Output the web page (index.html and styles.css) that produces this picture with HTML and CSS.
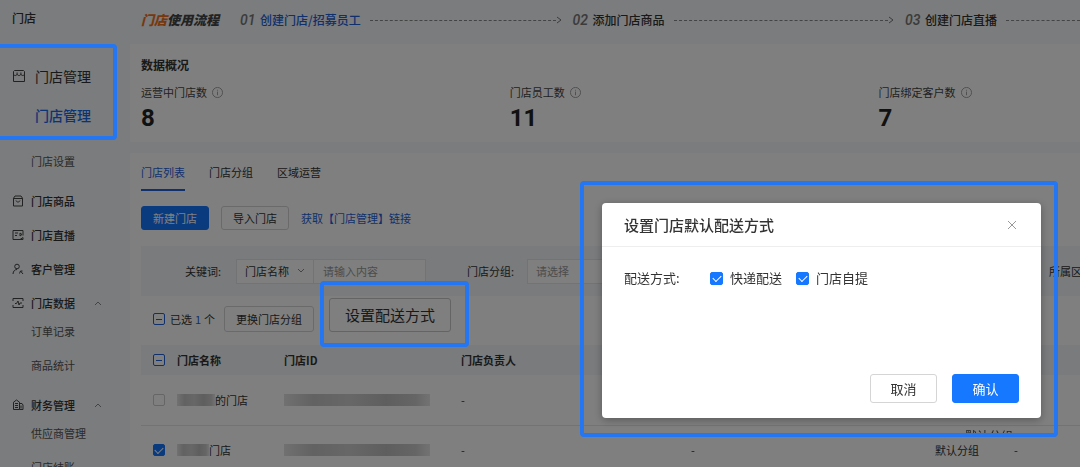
FILE: index.html
```html
<!DOCTYPE html>
<html lang="zh-CN">
<head>
  <meta charset="UTF-8">
  <meta name="viewport" content="width=device-width, initial-scale=1.0">
  <title>门店管理</title>
  <link rel="stylesheet" href="styles.css">
</head>
<body>
  <div class="layout">
    <aside class="sidebar">
      <h2 class="sidebar-title">门店</h2>
      <nav class="menu">
        <div class="menu-current">
          <a class="menu-big" href="#">
            <svg class="icon icon-big" viewBox="0 0 14 14"><path d="M2.5 1.500h9l1 1v10h-11v-10zM1.500 5c0 2 3.600 2 3.600 0 0 2 3.800 2 3.800 0 0 2 3.600 2 3.600 0M5.100 3.500V5M8.900 3.500V5"/></svg>
            门店管理
          </a>
          <a class="menu-big active" href="#">门店管理</a>
        </div>
        <a class="menu-sub" href="#">门店设置</a>
        <a class="menu-item" href="#">
          <svg class="icon" viewBox="0 0 12 12"><path d="M1.5 3.2 3 1h6l1.500 2.200V11h-9zM1.500 3.500h9M4 5.500c.5 2 3.500 2 4 0"/></svg>
          门店商品
        </a>
        <a class="menu-item" href="#">
          <svg class="icon" viewBox="0 0 12 12"><path d="M8 10.500H1v-9h10v5M3 4h3M3 6.500h2M8 4l2 1.500L8 7zM8 10.500l3-2v2z"/></svg>
          门店直播
        </a>
        <a class="menu-item" href="#">
          <svg class="icon" viewBox="0 0 12 12"><circle cx="5" cy="3.500" r="2.300"/><path d="M1 11c.2-3 1.800-4.500 4-4.500M7.500 10.500l1-2.500 2.500 3M8.500 8h2"/></svg>
          客户管理
        </a>
        <a class="menu-item" href="#">
          <svg class="icon" viewBox="0 0 12 12"><path d="M1 4V1.500h10V4M1 8v2.500h10V8M3 6.500h1.500L6 4l1 4 1-2h2"/></svg>
          门店数据
          <svg class="arrow" viewBox="0 0 8 6"><path d="m1 5 3-3 3 3"/></svg>
        </a>
        <div class="menu-group">
          <a class="menu-sub" href="#">订单记录</a>
          <a class="menu-sub" href="#">商品统计</a>
        </div>
        <a class="menu-item" href="#">
          <svg class="icon" viewBox="0 0 12 12"><path d="M1.500 10.500V3.200L4.500 1l3 2.200v7.300zM3 4.500h3M3 6.500h3M3 8.500h3M7.500 4.500H10l1 1.500v4.500H7.500M9 6.500v3"/></svg>
          财务管理
          <svg class="arrow" viewBox="0 0 8 6"><path d="m1 5 3-3 3 3"/></svg>
        </a>
        <div class="menu-group">
          <a class="menu-sub" href="#">供应商管理</a>
          <a class="menu-sub" href="#">门店结账</a>
        </div>
      </nav>
    </aside>

    <main class="main">
      <header class="flow">
        <h1 class="flow-title"><span class="orange">门店</span>使用流程</h1>
        <ol class="steps">
          <li class="step active">
            <span class="num">01</span>创建门店/招募员工<span class="dash"></span>
            <svg class="tip" viewBox="0 0 6 8"><path d="m1 1 4 3-4 3"/></svg>
          </li>
          <li class="step">
            <span class="num">02</span>添加门店商品<span class="dash"></span>
            <svg class="tip" viewBox="0 0 6 8"><path d="m1 1 4 3-4 3"/></svg>
          </li>
          <li class="step last">
            <span class="num">03</span>创建门店直播<span class="dash"></span>
          </li>
        </ol>
      </header>

      <section class="card overview">
        <h2 class="card-title">数据概况</h2>
        <div class="stats">
          <div class="stat">
            <p class="stat-label">运营中门店数
              <svg class="info" viewBox="0 0 12 12"><circle cx="6" cy="6" r="5.500"/><path d="M6 5v4M6 3v1"/></svg>
            </p>
            <p class="stat-value">8</p>
          </div>
          <div class="stat">
            <p class="stat-label">门店员工数
              <svg class="info" viewBox="0 0 12 12"><circle cx="6" cy="6" r="5.500"/><path d="M6 5v4M6 3v1"/></svg>
            </p>
            <p class="stat-value">11</p>
          </div>
          <div class="stat">
            <p class="stat-label">门店绑定客户数
              <svg class="info" viewBox="0 0 12 12"><circle cx="6" cy="6" r="5.500"/><path d="M6 5v4M6 3v1"/></svg>
            </p>
            <p class="stat-value">7</p>
          </div>
        </div>
      </section>

      <section class="card list">
        <nav class="tabs">
          <a class="tab active" href="#">门店列表</a>
          <a class="tab" href="#">门店分组</a>
          <a class="tab" href="#">区域运营</a>
        </nav>

        <div class="actions">
          <button class="btn primary" type="button">新建门店</button>
          <button class="btn" type="button">导入门店</button>
          <a class="link" href="#">获取【门店管理】链接</a>
        </div>

        <form class="filter">
          <label class="filter-label" for="keyword-type">关键词:</label>
          <div class="field-group">
            <span class="select-box">
              <select id="keyword-type"><option>门店名称</option></select>
              <svg class="arrow" viewBox="0 0 8 6"><path d="m1 1 3 3 3-3"/></svg>
            </span>
            <input class="text-input" type="text" placeholder="请输入内容" aria-label="关键词内容">
          </div>
          <label class="filter-label second" for="group">门店分组:</label>
          <span class="select-box empty">
            <select id="group"><option>请选择</option></select>
          </span>
          <label class="filter-label area" for="area">所属区域:</label>
          <span class="select-box empty">
            <select id="area"><option>请选择</option></select>
          </span>
        </form>

        <div class="toolbar">
          <label class="picked"><input class="check mixed" type="checkbox">已选 <b class="count">1</b> 个</label>
          <button class="btn group-btn" type="button">更换门店分组</button>
          <span class="delivery">
            <button class="btn delivery-btn" type="button">设置配送方式</button>
          </span>
        </div>

        <table class="table">
          <colgroup>
            <col class="col-check"><col class="col-name"><col class="col-id"><col class="col-owner"><col class="col-phone"><col class="col-group"><col>
          </colgroup>
          <thead>
            <tr>
              <th class="check-cell"><input class="check mixed" type="checkbox" aria-label="全选"></th>
              <th>门店名称</th>
              <th>门店ID</th>
              <th>门店负责人</th>
              <th></th>
              <th></th>
              <th></th>
            </tr>
          </thead>
          <tbody>
            <tr>
              <td class="check-cell"><input class="check" type="checkbox" aria-label="选择门店"></td>
              <td><span class="name"><i class="mosaic long"></i>的门店</span></td>
              <td><i class="mosaic wide"></i></td>
              <td>-</td>
              <td>-</td>
              <td></td>
              <td>-</td>
            </tr>
            <tr>
              <td class="check-cell"><input class="check" type="checkbox" aria-label="选择门店" checked></td>
              <td><span class="name"><i class="mosaic short"></i>门店</span></td>
              <td><i class="mosaic wide"></i></td>
              <td>-</td>
              <td>-</td>
              <td>默认分组</td>
              <td>-</td>
            </tr>
          </tbody>
        </table>
      </section>
    </main>
  </div>

  <div class="mask"></div>

  <div class="dialog-frame">
    <div class="dialog" role="dialog" aria-labelledby="dialog-title">
      <div class="dialog-head">
        <h3 id="dialog-title">设置门店默认配送方式</h3>
        <button class="close" type="button" aria-label="关闭">
          <svg viewBox="0 0 10 10"><path d="m1 1 8 8M9 1 1 9"/></svg>
        </button>
      </div>
      <div class="dialog-body">
        <span class="dialog-label">配送方式:</span>
        <label class="option"><input class="check" type="checkbox" checked>快递配送</label>
        <label class="option"><input class="check" type="checkbox" checked>门店自提</label>
      </div>
      <div class="dialog-foot">
        <button class="btn dialog-btn" type="button">取消</button>
        <button class="btn dialog-btn primary" type="button">确认</button>
      </div>
    </div>
    <span class="peek">默认分组</span>
  </div>
</body>
</html>
```

FILE: styles.css
```css
* {
  box-sizing: border-box;
  margin: 0;
  padding: 0;
}

body {
  height: 100vh;
  overflow: hidden;
  background: #f5f8fa;
  font-family: "Noto Sans CJK SC", sans-serif;
  font-size: 11px;
  line-height: 18px;
  color: #333;
}

a {
  color: inherit;
  text-decoration: none;
}

svg {
  fill: none;
  stroke: currentColor;
  flex: none;
}

button,
input,
select {
  font: inherit;
  color: inherit;
}

.layout {
  display: flex;
  height: 100vh;
  overflow: hidden;
}

/* sidebar */
.sidebar {
  flex: none;
  width: 130px;
}

.sidebar-title {
  height: 44px;
  padding-left: 12px;
  font-size: 12px;
  font-weight: 500;
  line-height: 36px;
}

.menu-current {
  position: relative;
  padding: 12px 0 6px;
  margin-bottom: 4px;
}

.menu-current::after {
  content: "";
  position: absolute;
  inset: 0 13px 0 -4px;
  border: 4px solid #2476f2;
  border-radius: 4px;
  z-index: 20;
}

.menu-big {
  display: flex;
  align-items: center;
  gap: 9px;
  height: 39px;
  padding-left: 12px;
  font-size: 14px;
}

.menu-big.active {
  padding-left: 35px;
  font-weight: 500;
  color: #1668e8;
}

.menu-item {
  display: flex;
  align-items: center;
  gap: 7px;
  height: 22px;
  margin-top: 12px;
  padding-left: 12px;
  font-weight: 500;
}

.menu-sub {
  display: block;
  padding-left: 31px;
  line-height: 34px;
  color: #555;
}

.icon {
  width: 12px;
  height: 12px;
  color: #444;
}

.icon-big {
  width: 14px;
  height: 14px;
}

.arrow {
  width: 8px;
  height: 6px;
  color: #888;
}

.menu-item .arrow {
  margin-left: 12px;
}

/* main */
.main {
  flex: 1;
  min-width: 0;
  display: flex;
  flex-direction: column;
}

.flow {
  flex: none;
  display: flex;
  height: 44px;
  padding: 0 0 4px 11px;
  align-items: center;
}

.flow-title {
  width: 99px;
  font-size: 13px;
  font-style: italic;
  font-weight: 900;
  white-space: nowrap;
  color: #444;
}

.orange {
  color: #f0701c;
}

.steps {
  flex: 1;
  display: grid;
  grid-template-columns: 19fr 19fr 10fr;
  list-style: none;
  font-size: 12px;
  font-weight: 500;
}

.step {
  display: flex;
  align-items: center;
  padding-right: 11px;
  white-space: nowrap;
}

.step.last {
  padding-right: 0;
}

.step.active {
  color: #1f61d8;
}

.num {
  width: 20px;
  font-family: Roboto, sans-serif;
  font-size: 14px;
  font-style: italic;
  font-weight: 500;
  color: #777;
}

.dash {
  flex: 1;
  margin-left: 9px;
  border-top: 1px dashed #888;
}

.tip {
  width: 6px;
  height: 8px;
  color: #777;
}

.card {
  background: #fff;
}

.overview {
  flex: none;
  padding: 12px 17px 11px 11px;
  margin-bottom: 11px;
}

.card-title {
  font-size: 12px;
  font-weight: 700;
  line-height: 18px;
}

.stats {
  display: grid;
  grid-template-columns: 2fr 2fr 1fr;
  margin-top: 9px;
}

.stat-label {
  display: flex;
  align-items: center;
  gap: 5px;
  color: #444;
}

.info {
  width: 11px;
  height: 11px;
  color: #999;
}

.stat-value {
  margin-top: 4px;
  font-family: "Liberation Sans Narrow", Roboto, sans-serif;
  font-size: 24px;
  font-weight: 700;
  line-height: 26px;
  color: #222;
}

.list {
  flex: 1;
  padding-left: 11px;
}

.tabs {
  display: flex;
  gap: 24px;
}

.tab {
  padding-top: 2px;
  line-height: 34px;
  border-bottom: 2px solid transparent;
}

.tab.active {
  color: #1f61d8;
  border-color: #1f61d8;
}

.actions {
  display: flex;
  align-items: center;
  gap: 12px;
  margin-top: 15px;
}

.btn {
  height: 24px;
  padding: 0 11px;
  background: #fff;
  border: 1px solid #d5d5d5;
  border-radius: 3px;
  white-space: nowrap;
}

.btn.primary {
  background: #1677ff;
  border-color: #1677ff;
  color: #fff;
}

.link {
  color: #1f61d8;
}

.filter {
  display: flex;
  align-items: center;
  height: 50px;
  margin-top: 16px;
  padding-left: 44px;
  background: #f2f6f8;
  overflow: hidden;
}

.filter-label {
  flex: none;
  width: 51px;
}

.filter-label.second {
  width: 60px;
  margin-left: 41px;
}

.filter-label.area {
  width: 60px;
  margin-left: auto;
  margin-right: -29px;
}

.field-group {
  display: flex;
}

.select-box {
  display: flex;
  align-items: center;
  width: 78px;
  height: 25px;
  padding: 0 8px;
  background: #fff;
  border: 1px solid #e4e6e8;
}

.select-box select {
  flex: 1;
  min-width: 0;
  appearance: none;
  background: none;
  border: none;
}

.select-box.empty {
  flex: none;
  color: #999;
}

.area + .select-box {
  width: 0;
  padding: 0;
  border: none;
}

.text-input {
  width: 112px;
  height: 25px;
  padding: 0 9px;
  background: #fff;
  border: 1px solid #e4e6e8;
  border-left: none;
}

.text-input::placeholder {
  color: #999;
}

.toolbar {
  display: flex;
  align-items: flex-end;
  height: 49px;
  padding: 0 0 13px 12px;
}

.picked {
  display: flex;
  align-items: center;
  gap: 3px;
  width: 71px;
  height: 26px;
  white-space: nowrap;
}

.picked .check {
  margin-right: 2px;
}

.count {
  font-weight: 400;
  color: #1f61d8;
}

.group-btn {
  height: 26px;
}

.delivery {
  position: relative;
  margin-left: 15px;
}

.delivery::after {
  content: "";
  position: absolute;
  inset: -17px -18px -15px -9px;
  border: 4px solid #2476f2;
  border-radius: 4px;
  z-index: 20;
}

.delivery-btn {
  display: block;
  height: 34px;
  padding: 0 15px;
  font-size: 15px;
  border-color: #c8c8c8;
}

/* checkbox */
.check {
  appearance: none;
  flex: none;
  display: grid;
  place-items: center;
  width: 12px;
  height: 12px;
  background: #fff;
  border: 1px solid #ccc;
  border-radius: 2px;
}

.check:checked {
  background: #1677ff;
  border-color: #1677ff;
}

.check:checked::before {
  content: "";
  width: 7px;
  height: 4px;
  margin-bottom: 2px;
  border: solid #fff;
  border-width: 0 0 1px 1px;
  transform: rotate(-45deg);
}

.check.mixed {
  border-color: #1f61d8;
}

.check.mixed::before {
  content: "";
  width: 6px;
  height: 1px;
  background: #1f61d8;
}

/* table */
.table {
  width: 100%;
  table-layout: fixed;
  border-collapse: collapse;
  text-align: left;
}

.col-check { width: 36px; }
.col-name { width: 107px; }
.col-id { width: 177px; }
.col-owner { width: 230px; }
.col-phone { width: 244px; }
.col-group { width: 79px; }

.table th {
  height: 30px;
  background: #f2f6f8;
  font-weight: 700;
}

.table td {
  height: 50px;
  border-bottom: 1px solid #e6e6e6;
}

.table .check-cell {
  padding-left: 12px;
}

.name {
  display: flex;
  align-items: center;
}

.mosaic {
  display: block;
  height: 12px;
  background: linear-gradient(90deg, #e2e2e2, #c4c4c4 20%, #cfcfcf 45%, #bdbdbd 70%, #cbcbcb 90%, #e6e6e6);
}

.mosaic.long { width: 38px; }
.mosaic.short { width: 32px; }
.mosaic.wide { width: 146px; }

/* dialog */
.mask {
  position: fixed;
  inset: 0;
  background: rgba(0, 0, 0, 0.5);
  z-index: 10;
}

.dialog-frame {
  position: fixed;
  top: 181px;
  right: 22px;
  width: 478px;
  padding: 18px 13px 15px 18px;
  border: 4px solid #2476f2;
  border-radius: 4px;
  z-index: 30;
}

.dialog {
  background: #fff;
  border-radius: 4px;
  box-shadow: 0 2px 8px rgba(0, 0, 0, 0.3);
  font-size: 13px;
}

.dialog-head {
  display: flex;
  align-items: center;
  justify-content: space-between;
  height: 44px;
  padding: 0 22px;
  border-bottom: 1px solid #eee;
}

.dialog-head h3 {
  font-size: 15px;
  font-weight: 500;
}

.close {
  display: flex;
  padding: 2px;
  background: none;
  border: none;
  color: #999;
}

.close svg {
  width: 10px;
  height: 10px;
}

.dialog-body {
  display: flex;
  align-items: center;
  height: 62px;
  padding: 0 22px;
}

.dialog-label {
  width: 86px;
}

.option {
  display: flex;
  align-items: center;
  gap: 7px;
  margin-right: 14px;
}

.option .check {
  width: 13px;
  height: 13px;
}

.dialog-foot {
  display: flex;
  justify-content: flex-end;
  gap: 15px;
  padding: 65px 22px 15px;
}

.dialog-btn {
  width: 67px;
  height: 29px;
}

/* top edge of the row label that sits under the frame */
.peek {
  position: absolute;
  right: 41px;
  bottom: 0;
  height: 3px;
  overflow: hidden;
  font-size: 12px;
  line-height: 12px;
  color: #222;
}
```
